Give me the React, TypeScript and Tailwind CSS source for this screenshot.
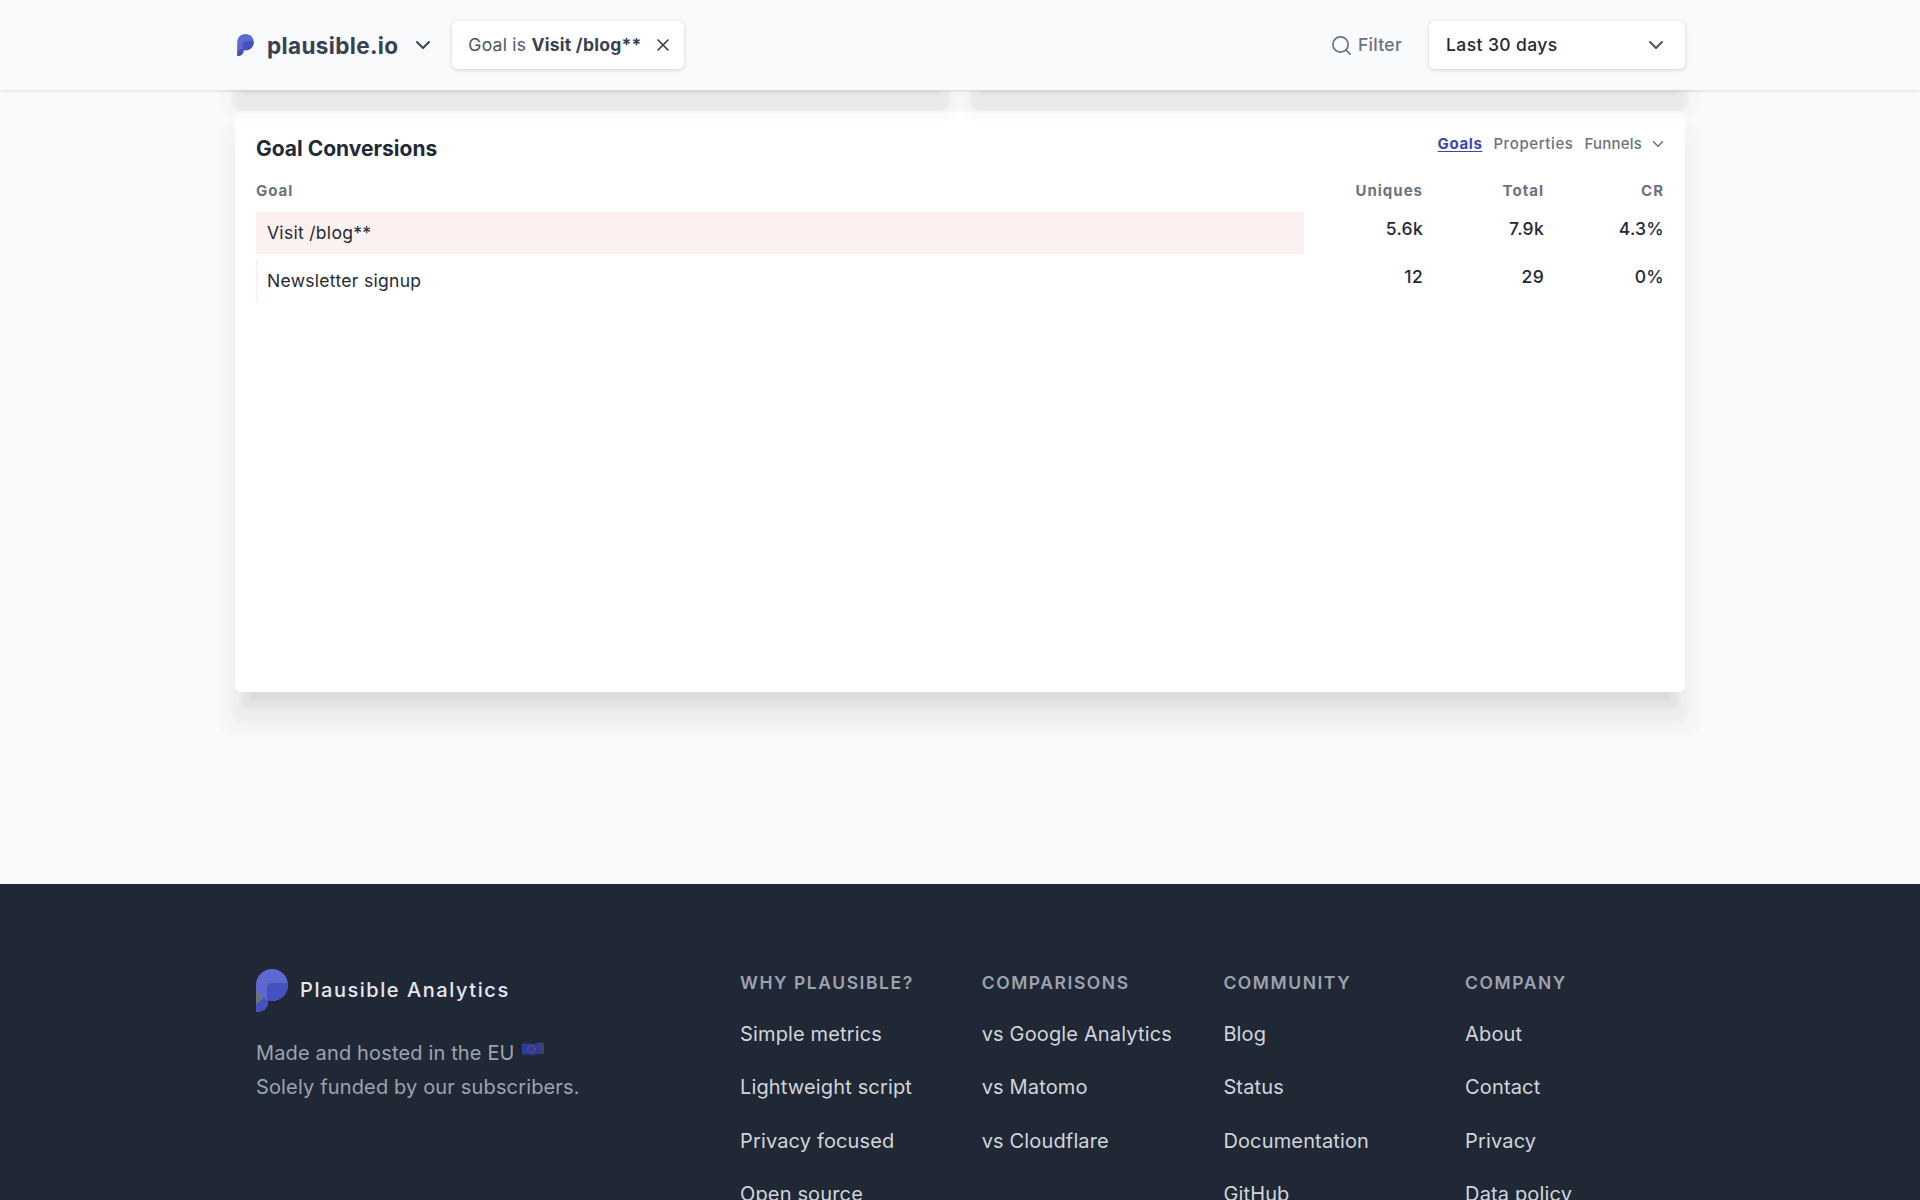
import React from "react";
import { ChevronDown, X, Search } from "lucide-react";

function Logo({ className }: { className: string }) {
  return (
    <svg viewBox="0 0 32 43" className={className}>
      <path d="M0 16C0 7 7 0 16 0s16 7 16 16-7 16-16 16h-4v2c0 5-5 9-12 9V16z" fill="#5d69d1" />
      <path d="M11 19c0-3 2-5 5-5h16c1 10-7 18-16 18h-5V19z" fill="#4452c0" />
      <path d="M0 21l8 8-8 7z" fill="#6b7280" />
      <path d="M0 35l8-6 4 3v2c0 5-5 9-12 9V35z" fill="#4452c0" />
    </svg>
  );
}

function Flag() {
  return (
    <svg viewBox="0 0 22 16" className="ml-[7px] inline-block h-[16px] w-[22px] align-[2px]">
      <path d="M0 2c5-2 8 1 12 0 4-1 6-2 10-1v11c-4-1-6 0-10 1-4 1-7-2-12 0z" fill="#2f3a9e" />
      <path d="M17 1.200c2-.4 3.500-.4 5-.2v11c-1.500-.3-3-.2-5 0z" fill="#3a4560" />
      <circle cx="9.500" cy="7" r="3.500" fill="none" stroke="#8a7f3c" strokeWidth="1" strokeDasharray="1 1" />
    </svg>
  );
}

const columns = [
  { title: "Why Plausible?", links: ["Simple metrics", "Lightweight script", "Privacy focused", "Open source"] },
  { title: "Comparisons", links: ["vs Google Analytics", "vs Matomo", "vs Cloudflare"] },
  { title: "Community", links: ["Blog", "Status", "Documentation", "GitHub"] },
  { title: "Company", links: ["About", "Contact", "Privacy", "Data policy"] },
];

const rows = [
  { name: "Visit /blog**", uniques: "5.6k", total: "7.9k", cr: "4.3%", width: "100%" },
  { name: "Newsletter signup", uniques: "12", total: "29", cr: "0%", width: "2px" },
];

export default function App() {
  return (
    <div className="flex h-screen flex-col overflow-hidden bg-[#f9fafb] font-['Inter',sans-serif] text-[#1f2937]">
      <header className="relative z-10 h-[90px] shrink-0 bg-[#f9fafb] shadow-[0_1px_3px_rgba(0,0,0,0.12)]">
        <div className="mx-auto flex h-full w-[1450px] items-center">
          <Logo className="ml-[2px] h-[22px] w-[17px]" />
          <span className="ml-[13px] pt-[1px] text-[22.5px] font-bold tracking-[0.35px] text-[#374151]">plausible.io</span>
          <ChevronDown className="ml-[13px] h-[24px] w-[24px] text-[#374151]" strokeWidth={2} />
          <div className="ml-[17px] flex h-[48px] w-[232px] items-center rounded-[6px] bg-white pl-[16px] text-[17.5px] tracking-[0.25px] text-[#4b5563] shadow-[0_1px_4px_rgba(0,0,0,0.16)]">
            <span className="pt-[1px]">Goal is&nbsp;<b className="font-bold text-[#374151]">Visit /blog**</b></span>
            <X className="ml-[11px] h-[20px] w-[20px] text-[#374151]" strokeWidth={2} />
          </div>
          <div className="ml-auto flex items-center text-[17.5px] font-medium tracking-[0.3px] text-[#6b7280]">
            <Search className="mr-[5px] h-[23px] w-[23px]" strokeWidth={1.75} />
            Filter
          </div>
          <div className="ml-[27px] flex h-[48px] w-[256px] items-center justify-between rounded-[6px] bg-white pl-[17px] pr-[17px] text-[17.5px] font-medium tracking-[0.4px] text-[#1f2937] shadow-[0_1px_4px_rgba(0,0,0,0.16)]">
            Last 30 days
            <ChevronDown className="h-[24px] w-[24px] text-[#4b5563]" strokeWidth={2} />
          </div>
        </div>
      </header>

      <main className="mx-auto -mt-[70px] flex h-[864px] w-[1450px] shrink-0 flex-col">
        <div className="relative z-[1] flex h-[60px] shrink-0 justify-between">
          <div className="w-[712px] rounded-[6px] bg-white shadow-[0_22px_3px_-7px_rgba(0,0,0,0.03),0_28px_3px_3px_rgba(0,0,0,0.045),0_27px_5px_13px_rgba(0,0,0,0.02)]" />
          <div className="w-[712px] rounded-[6px] bg-white shadow-[0_22px_3px_-7px_rgba(0,0,0,0.03),0_28px_3px_3px_rgba(0,0,0,0.045),0_27px_5px_13px_rgba(0,0,0,0.02)]" />
        </div>
        <section className="mt-[31px] h-[581px] rounded-[6px] bg-white px-[21px] pt-[24px] shadow-[0_24px_2px_-15px_rgba(0,0,0,0.03),0_24px_3px_-7px_rgba(0,0,0,0.035),0_28px_4px_2px_rgba(0,0,0,0.03),0_28px_5px_17px_rgba(0,0,0,0.02)]">
          <div className="flex items-start justify-between">
            <h3 className="text-[21px] font-bold leading-[28px] text-[#1f2937]">Goal Conversions</h3>
            <div className="flex h-[18px] items-center text-[15px] leading-[18px] tracking-[0.6px] text-[#6b7280]">
              <span className="font-bold text-[#3b46b0] underline underline-offset-2">Goals</span>
              <span className="ml-[11px] font-medium">Properties</span>
              <span className="ml-[11px] font-medium tracking-[0.2px]">Funnels</span>
              <ChevronDown className="ml-[7px] -mr-[3px] h-[18px] w-[18px]" strokeWidth={2} />
            </div>
          </div>
          <div className="mt-[18px] flex text-[15px] font-bold leading-[20px] tracking-[1px] text-[#6b7280]">
            <div className="w-[1048px]">Goal</div>
            <div className="w-[119px] text-right">Uniques</div>
            <div className="w-[121px] text-right">Total</div>
            <div className="w-[120px] text-right">CR</div>
          </div>
          <div className="mt-[11px] flex flex-col gap-[6px]">
            {rows.map((r) => (
              <div key={r.name} className="flex h-[42px] text-[17.5px] tracking-[0.3px]">
                <div className="relative flex w-[1048px] items-center pl-[11px]">
                  <div className="absolute inset-y-0 left-0 bg-[#fcf1f0]" style={{ width: r.width }} />
                  <span className="relative">{r.name}</span>
                </div>
                <div className="w-[119px] pt-[4px] text-right font-medium">{r.uniques}</div>
                <div className="w-[121px] pt-[4px] text-right font-medium">{r.total}</div>
                <div className="w-[120px] pt-[4px] text-right font-medium">{r.cr}</div>
              </div>
            ))}
          </div>
        </section>
      </main>

      <footer className="grow bg-[#212835]">
        <div className="mx-auto flex w-[1450px] pl-[21px] pt-[85px]">
          <div className="w-[484px] shrink-0">
            <div className="flex items-center">
              <Logo className="h-[43px] w-[32px]" />
              <span className="mb-[2px] ml-[12px] text-[20px] font-medium tracking-[1.55px] text-[#e5e7eb]">Plausible Analytics</span>
            </div>
            <p className="mt-[24px] text-[20px] leading-[34px] tracking-[0.15px] text-[#9ca3af]">
              Made and hosted in the EU<Flag />
              <br />
              Solely funded by our subscribers.
            </p>
          </div>
          {columns.map((c) => (
            <div key={c.title} className="w-[241.700px] shrink-0">
              <div className="text-[17.5px] font-semibold uppercase leading-[28px] tracking-[1.55px] text-[#9ca3af]">{c.title}</div>
              <ul className="mt-[22.500px] flex flex-col gap-[25px] text-[20px] leading-[28.500px] tracking-[0.15px] text-[#d1d5db]">
                {c.links.map((l) => (
                  <li key={l}>{l}</li>
                ))}
              </ul>
            </div>
          ))}
        </div>
      </footer>
    </div>
  );
}
